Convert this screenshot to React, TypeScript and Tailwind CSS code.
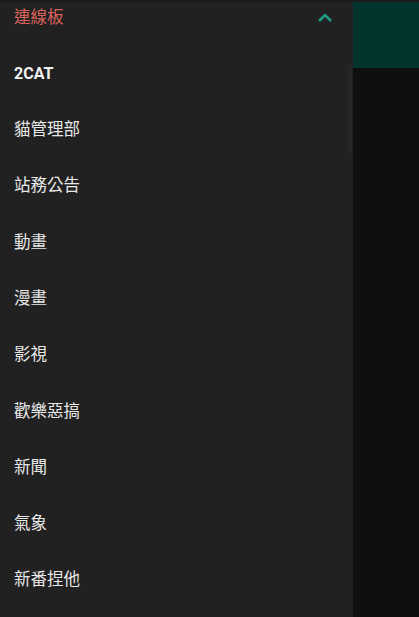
import React from 'react';

const boards = ['2CAT', '貓管理部', '站務公告', '動畫', '漫畫', '影視', '歡樂惡搞', '新聞', '氣象', '新番捏他'];

const font = { fontFamily: 'Roboto, "Noto Sans CJK TC", sans-serif' };

export default function App() {
  return (
    <div className="relative w-[419px] h-[617px] overflow-hidden bg-[#0f0f0f] flex flex-col" style={font}>
      {/* status strip */}
      <div className="h-[2px] bg-[#1a1a1a] shrink-0" />
      <div className="flex flex-1 min-h-0">
        {/* Drawer */}
        <aside className="relative w-[353px] bg-[#212121] flex flex-col">
          <div className="h-[32px] flex items-center justify-between pl-[14px] pr-[19px]">
            <span className="text-[16.5px] text-[#d9625c] leading-none">連線板</span>
            <svg width="18" height="12" viewBox="0 0 18 12" className="-mt-[2px]">
              <path d="M3 10 L9 4 L15 10" fill="none" stroke="#1f9c86" strokeWidth="2.6" />
            </svg>
          </div>
          <div className="mt-[12px] flex flex-col">
            {boards.map((b, i) => (
              <div key={b} className="h-[56.3px] flex items-center pl-[14px]">
                <span
                  className={
                    i === 0
                      ? 'text-[16px] font-bold text-[#f2f2f2]'
                      : 'text-[16.5px] text-[#e8e8e8]'
                  }
                >
                  {b}
                </span>
              </div>
            ))}
          </div>
          {/* scrollbar */}
          <div className="absolute right-[1px] top-[63px] w-[4px] h-[88px] bg-[#262626]" />
        </aside>
        {/* Content behind */}
        <div className="flex-1 flex flex-col">
          <div className="h-[66px] bg-[#00342c]" />
          <div className="flex-1 bg-[#0f0f0f]" />
        </div>
      </div>
    </div>
  );
}
